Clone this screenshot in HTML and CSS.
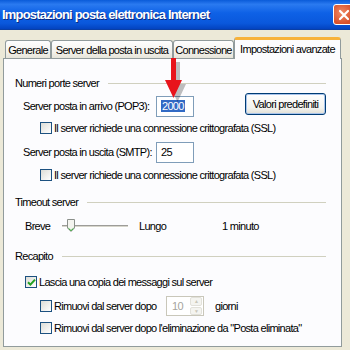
FILE: index.html
```html
<!DOCTYPE html>
<html lang="it">
  <head>
    <meta charset="UTF-8" />
    <meta name="viewport" content="width=device-width, initial-scale=1.0" />
    <title>Impostazioni posta elettronica Internet</title>
    <link rel="stylesheet" href="styles.css">
  </head>
  <body>
    <div class="window">
      <div class="titlebar">
        <span class="title">Impostazioni posta elettronica Internet</span>
        <span class="close">
          <svg width="12" height="12" viewBox="0 0 12 12">
            <path d="M2 2 L10 10 M10 2 L2 10" stroke="#fff" stroke-width="2.2" stroke-linecap="round" />
          </svg>
        </span>
      </div>

      <div class="dialog">
        <div class="tabs">
          <div class="tab tab-generale">Generale</div>
          <div class="tab tab-server">Server della posta in uscita</div>
          <div class="tab tab-conn">Connessione</div>
          <div class="tab tab-active">Impostazioni avanzate</div>
        </div>

        <div class="panel">
          <div class="group-title">Numeri porte server</div>

          <div class="row row-pop">
            <span class="label">Server posta in arrivo (POP3):</span>
            <span class="field"><span class="selected">2000</span></span>
            <button class="btn">Valori predefiniti</button>
          </div>
          <div class="check-row indent">
            <span class="box"></span>
            <span>Il server richiede una connessione crittografata (SSL)</span>
          </div>

          <div class="row row-smtp">
            <span class="label">Server posta in uscita (SMTP):</span>
            <span class="field">25</span>
          </div>
          <div class="check-row indent row-ssl2">
            <span class="box"></span>
            <span>Il server richiede una connessione crittografata (SSL)</span>
          </div>

          <div class="group-title title-timeout">Timeout server</div>
          <div class="row row-slider">
            <span class="slider-label">Breve</span>
            <span class="slider">
              <span class="track"></span>
              <svg class="thumb" width="8" height="13" viewBox="0 0 8 13">
                <path d="M0.5 0.5 H7.5 V9 L4 12.5 L0.5 9 Z" fill="#f4f4ef" stroke="#8a8f8a" />
                <path d="M1.5 9.3 L4 11.6 L6.5 9.3" fill="none" stroke="#21a121" />
              </svg>
            </span>
            <span class="lungo">Lungo</span>
            <span class="minuto">1 minuto</span>
          </div>

          <div class="group-title title-recapito">Recapito</div>
          <div class="check-row row-keep">
            <span class="box">
              <svg width="9" height="9" viewBox="0 0 9 9">
                <path d="M1 4.2 L3.4 6.6 L8 1.6" fill="none" stroke="#21a121" stroke-width="2" />
              </svg>
            </span>
            <span>Lascia una copia dei messaggi sul server</span>
          </div>
          <div class="check-row indent row-days">
            <span class="box"></span>
            <span class="days-label">Rimuovi dal server dopo</span>
            <span class="spinner">
              <span class="spin-value">10</span>
              <span class="spin-buttons">
                <span class="spin-btn">&#9650;</span>
                <span class="spin-btn">&#9660;</span>
              </span>
            </span>
            <span class="giorni">giorni</span>
          </div>
          <div class="check-row indent row-deleted">
            <span class="box"></span>
            <span>Rimuovi dal server dopo l'eliminazione da "Posta eliminata"</span>
          </div>
        </div>
      </div>

      <svg class="arrow" width="24" height="48" viewBox="0 0 24 48">
        <path d="M8 2 H13 V24 H19 L10.5 42 L2 24 H8 Z" fill="#000" opacity="0.25" transform="translate(4 2)" />
        <path d="M8 0 H13 V22 H19 L10.5 40 L2 22 H8 Z" fill="#e8141b" />
      </svg>
    </div>
  </body>
</html>
```

FILE: styles.css
```css
* {
  margin: 0;
  padding: 0;
  box-sizing: border-box;
}

body {
  width: 350px;
  height: 350px;
  overflow: hidden;
  font-family: "Liberation Sans", Arial, sans-serif;
  font-size: 11px;
  letter-spacing: -0.7px;
  white-space: nowrap;
  color: #000;
  background: #ece9d8;
}

.window {
  position: relative;
  width: 350px;
  height: 350px;
}

/* title bar */

.titlebar {
  height: 30px;
  display: flex;
  align-items: center;
  padding-left: 2px;
  background: linear-gradient(#0a5bd9, #2a7af0 15%, #0e61e6 45%, #0a58dc 80%, #0343c0);
  border-bottom: 1px solid #0a3fa6;
}

.title {
  color: #fff;
  font-weight: bold;
  font-size: 13px;
  letter-spacing: -0.8px;
  text-shadow: 1px 1px 0 #0a2a80;
}

.close {
  margin-left: auto;
  width: 21px;
  height: 21px;
  margin-right: -4px;
  display: flex;
  align-items: center;
  justify-content: center;
  background: radial-gradient(circle at 40% 40%, #f08a66, #d9502a 70%);
  border: 1px solid #fff;
  border-radius: 3px;
}

/* tabs */

.dialog {
  padding: 0 0 0 3px;
}

.tabs {
  height: 28px;
  display: flex;
  align-items: flex-end;
  padding-left: 2px;
}

.tab {
  height: 18px;
  display: flex;
  align-items: center;
  justify-content: center;
  background: linear-gradient(#fefefe, #f4f3ee 60%, #e6e4d9);
  border: 1px solid #919b9c;
  border-bottom: none;
  border-radius: 3px 3px 0 0;
}

.tab-generale { width: 46px; }
.tab-server { width: 122px; }
.tab-conn { width: 61px; }

.tab-active {
  width: 107px;
  height: 22px;
  margin-bottom: -1px;
  position: relative;
  background: #fcfcfe;
  border-top: 3px solid #f7b23b;
  padding-bottom: 2px;
}

.panel {
  width: 339px;
  height: 289px;
  background: #fcfcfe;
  border: 1px solid #919b9c;
  padding: 16px 15px 0 11px;
}

/* rows */

.group-title {
  height: 16px;
  display: flex;
  align-items: center;
  gap: 9px;
}

.group-title::after {
  content: "";
  flex: 1;
  height: 1px;
  background: #d0d0bf;
}

.title-timeout { margin-top: 11px; }
.title-recapito { margin-top: 14px; }

.row {
  display: flex;
  align-items: center;
  padding-left: 8px;
}

.row-pop {
  height: 24px;
  margin-top: 3px;
}

.row-smtp {
  height: 22px;
  margin-top: 5px;
}

.label {
  width: 133px;
}

.field {
  width: 38px;
  height: 21px;
  border: 1px solid #7f9db9;
  background: #fff;
  display: flex;
  align-items: center;
  padding-left: 4px;
}

.selected {
  background: #316ac5;
  color: #fff;
  padding: 0 1px;
}

.btn {
  margin-left: auto;
  margin-top: -4px;
  width: 81px;
  height: 22px;
  font: inherit;
  letter-spacing: inherit;
  border: 1px solid #003c74;
  border-radius: 3px;
  background: linear-gradient(#ffffff, #f3f3ef 70%, #e1dfd4);
  box-shadow: inset 0 0 0 1px #a9c4eb;
}

.check-row {
  height: 16px;
  display: flex;
  align-items: center;
  margin-top: 2px;
}

.indent {
  padding-left: 25px;
}

.row-ssl2 { margin-top: 4px; }

.box {
  width: 12px;
  height: 12px;
  border: 1px solid #1c5180;
  background: linear-gradient(135deg, #dcdcd6, #fff);
  margin-right: 2px;
  display: flex;
  align-items: center;
  justify-content: center;
}

/* slider */

.row-slider {
  height: 16px;
  margin-top: 8px;
  padding-left: 10px;
}

.slider-label {
  width: 37px;
}

.slider {
  position: relative;
  width: 66px;
  height: 16px;
  display: flex;
  align-items: center;
}

.track {
  width: 100%;
  height: 3px;
  border-top: 1px solid #9d9c99;
  border-bottom: 1px solid #fff;
  background: #d6d5cb;
}

.thumb {
  position: absolute;
  left: 5px;
  top: 1px;
}

.lungo {
  margin-left: 11px;
}

.minuto {
  margin-left: 56px;
}

/* recapito */

.row-keep {
  margin-top: 10px;
  padding-left: 10px;
}

.row-days {
  height: 20px;
  margin-top: 6px;
}

.days-label {
  width: 112px;
}

.spinner {
  width: 38px;
  height: 20px;
  border: 1px solid #c9c7ba;
  background: #fff;
  display: flex;
  align-items: center;
  justify-content: space-between;
  padding-left: 5px;
}

.spin-value {
  color: #a5a49d;
}

.spin-buttons {
  width: 12px;
  height: 18px;
  display: flex;
  flex-direction: column;
  gap: 1px;
  margin-right: 1px;
}

.spin-btn {
  flex: 1;
  font-size: 5px;
  color: #c9c7ba;
  background: #f4f4f0;
  border: 1px solid #e2e1da;
  border-radius: 2px;
  display: flex;
  align-items: center;
  justify-content: center;
}

.giorni {
  margin-left: 11px;
}

.row-deleted {
  margin-top: 4px;
}

/* arrow overlay */

.arrow {
  position: absolute;
  left: 163px;
  top: 58px;
}
```
